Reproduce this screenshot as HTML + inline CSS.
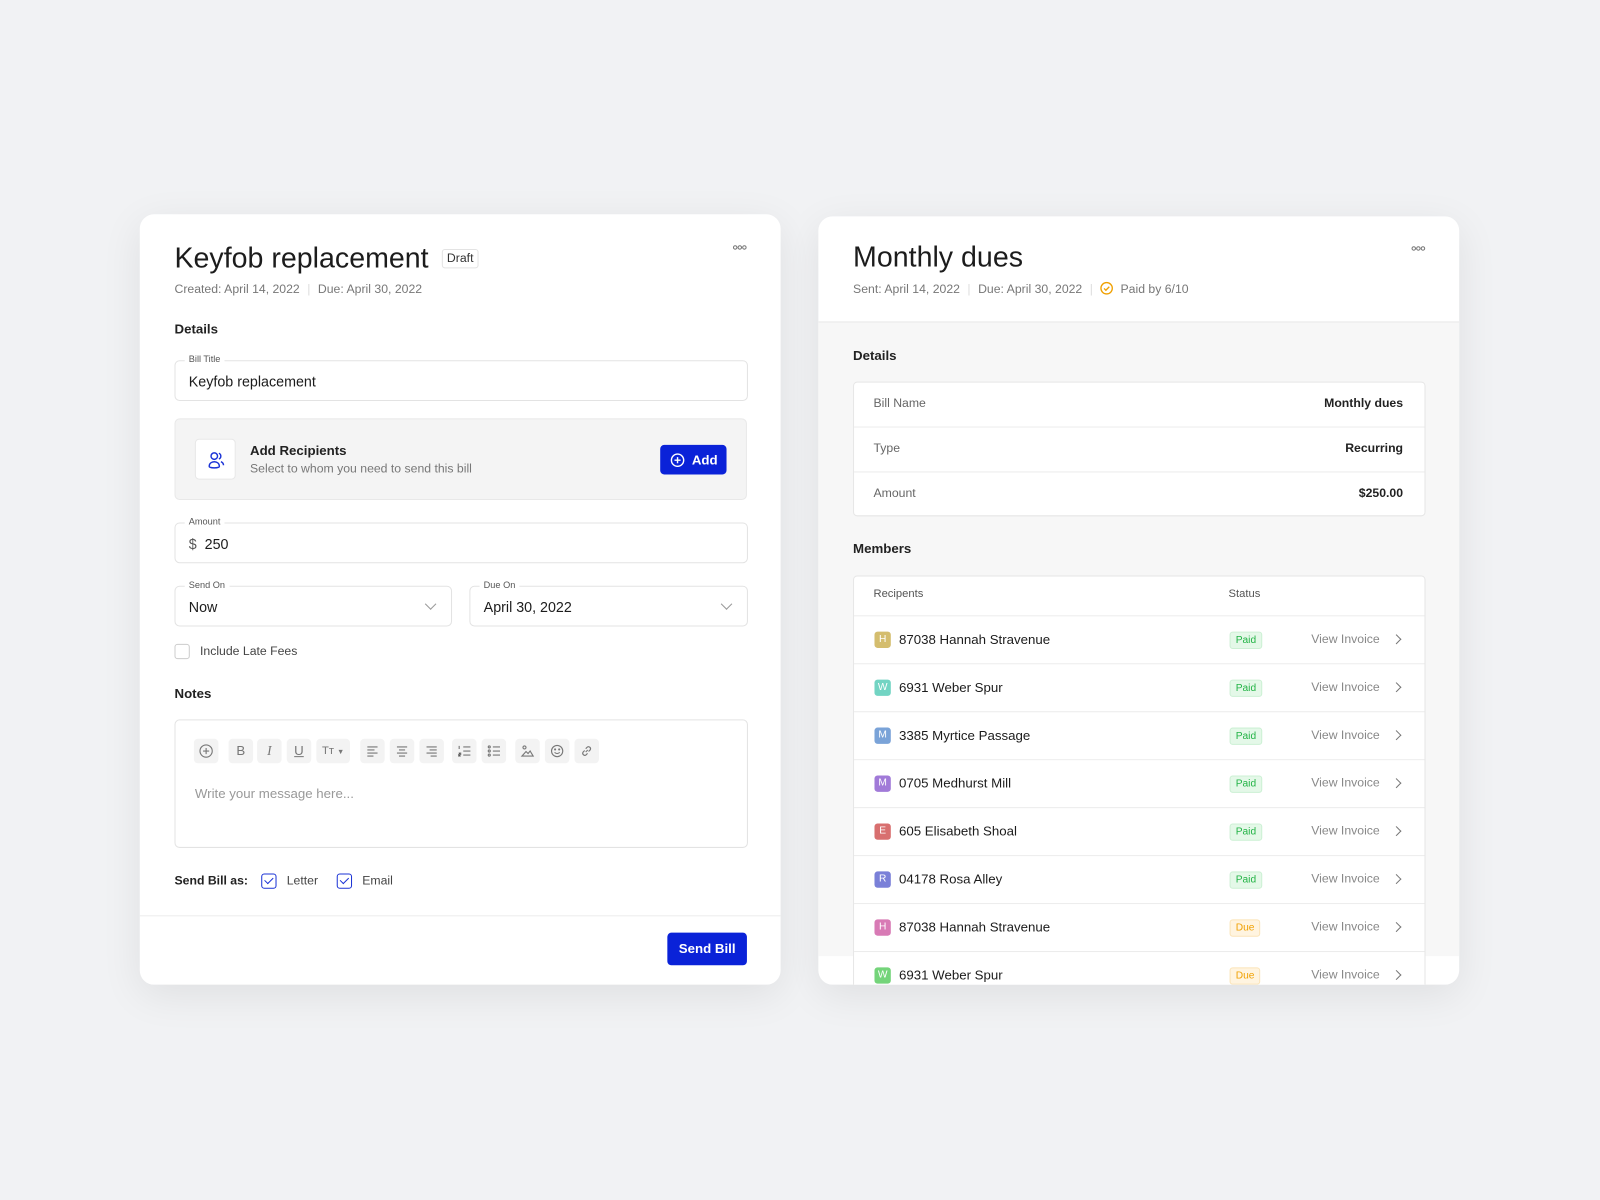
<!DOCTYPE html>
<html><head><meta charset="utf-8">
<style>
*{box-sizing:border-box;margin:0;padding:0}
html,body{width:1600px;height:1200px;overflow:hidden;background:#f1f2f4;font-family:"Liberation Sans",sans-serif;color:#1c1c1c}
#w{position:absolute;left:0;top:0;width:1568px;height:1176px;transform:scale(1.0204);transform-origin:0 0}
.a{position:absolute}
.card{position:absolute;background:#fff;border-radius:14px;box-shadow:0 10px 40px rgba(0,0,0,.08);overflow:hidden}
.t{font-size:12px;color:#777;white-space:nowrap}
.inp{position:absolute;border:1px solid #e3e3e3;border-radius:5px;background:#fff}
.lbl{position:absolute;top:-7px;left:9px;background:#fff;padding:0 4px;font-size:9px;color:#555}
.val{position:absolute;left:13px;top:12px;font-size:14px;color:#1c1c1c}
.chev{position:absolute;width:8px;height:8px;border-right:1.3px solid #999;border-bottom:1.3px solid #999;transform:rotate(45deg)}
.tb{position:absolute;top:724px;width:24px;height:24px;background:#f3f3f3;border-radius:4px;font-size:13px;color:#777;text-align:center;line-height:24px}
.tb svg{position:absolute;left:5px;top:5px}
.cb{position:absolute;width:15px;height:15px;border:1.5px solid #1b33d6;border-radius:3px}
.cb:after{content:"";position:absolute;left:4px;top:1px;width:4px;height:7px;border-right:1.5px solid #1b33d6;border-bottom:1.5px solid #1b33d6;transform:rotate(45deg)}
.row{position:absolute;left:0;right:0;border-top:1px solid #ececec;height:47px}
.av{position:absolute;left:20px;top:15px;width:16px;height:16px;border-radius:3px;color:#fff;font-size:10px;text-align:center;line-height:16px}
.nm{position:absolute;left:44px;top:15px;font-size:13px;color:#1c1c1c}
.bd{position:absolute;left:368px;top:15px;height:17px;padding:0 5px;font-size:10px;border-radius:3px;line-height:16px}
.paid{background:#e4f8e8;color:#22b345;border:1px solid #ccf0d4}
.due{background:#fff4e0;color:#f0a000;border:1px solid #fbe4b8}
.vi{position:absolute;left:448px;top:15px;font-size:12px;color:#888}
.rc{position:absolute;left:528px;top:19px;width:7px;height:7px;border-right:1.3px solid #777;border-top:1.3px solid #777;transform:rotate(45deg)}
</style></head><body><div id="w">

<div class="card" style="left:137px;top:210px;width:628px;height:755px">
 <div class="a" style="left:34px;top:27px;font-size:28px;color:#1c1c1c">Keyfob replacement</div>
 <div class="a" style="left:296px;top:34px;height:19px;border:1px solid #e3e3e3;border-radius:3px;padding:0 4px;font-size:12px;line-height:17px;color:#333">Draft</div>
 <svg class="a" style="left:581px;top:30px" width="14" height="5" viewBox="0 0 14 5" fill="none" stroke="#777" stroke-width="1"><circle cx="2.5" cy="2.5" r="1.7"/><circle cx="7" cy="2.5" r="1.7"/><circle cx="11.5" cy="2.5" r="1.7"/></svg>
 <div class="a t" style="left:34px;top:66px">Created: April 14, 2022 <span style="color:#ddd;margin:0 4px">|</span> Due: April 30, 2022</div>
 <div class="a" style="left:34px;top:105px;font-size:13px;font-weight:bold;color:#222">Details</div>

 <div class="inp" style="left:34px;top:143px;width:562px;height:40px"><div class="lbl">Bill Title</div><div class="val">Keyfob replacement</div></div>

 <div class="a" style="left:34px;top:200px;width:561px;height:80px;background:#f4f4f4;border:1px solid #e8e8e8;border-radius:5px">
  <div class="a" style="left:19px;top:19px;width:40px;height:40px;background:#fff;border:1px solid #e8e8e8;border-radius:4px">
   <svg class="a" style="left:10px;top:10px" width="20" height="20" viewBox="0 0 20 20" fill="none" stroke="#1b33d6" stroke-width="1.4"><circle cx="8" cy="6" r="3.2"/><path d="M3 16c0-3 2.5-4.5 5-4.5s5 1.5 5 4.5c0 1-2.5 1.5-5 1.5S3 17 3 16z"/><path d="M12.5 3.2a3 3 0 0 1 0 5.6M14.5 11.5c1.6.6 2.5 1.8 2.5 3.5"/></svg>
  </div>
  <div class="a" style="left:73px;top:23px;font-size:13px;font-weight:bold;color:#222">Add Recipients</div>
  <div class="a" style="left:73px;top:41px;font-size:12px;color:#777">Select to whom you need to send this bill</div>
  <div class="a" style="left:475px;top:25px;width:65px;height:29px;background:#0a22d8;border-radius:4px;color:#fff;font-size:13px;font-weight:bold;line-height:29px;padding-left:31px">Add
   <svg class="a" style="left:10px;top:8px" width="14" height="14" viewBox="0 0 14 14" fill="none" stroke="#fff" stroke-width="1.4"><circle cx="7" cy="7" r="6"/><path d="M7 4v6M4 7h6"/></svg></div>
 </div>

 <div class="inp" style="left:34px;top:302px;width:562px;height:40px"><div class="lbl">Amount</div><div class="val"><span style="color:#555">$</span>&nbsp; 250</div></div>
 <div class="inp" style="left:34px;top:364px;width:272px;height:40px"><div class="lbl">Send On</div><div class="val">Now</div><div class="chev" style="right:16px;top:13px"></div></div>
 <div class="inp" style="left:323px;top:364px;width:273px;height:40px"><div class="lbl">Due On</div><div class="val">April 30, 2022</div><div class="chev" style="right:16px;top:13px"></div></div>

 <div class="a" style="left:34px;top:421px;width:15px;height:15px;border:1px solid #ccc;border-radius:3px"></div>
 <div class="a" style="left:59px;top:421px;font-size:12px;color:#444">Include Late Fees</div>

 <div class="a" style="left:34px;top:462px;font-size:13px;font-weight:bold;color:#222">Notes</div>
 <div class="a" style="left:34px;top:495px;width:562px;height:126px;border:1px solid #e3e3e3;border-radius:5px"></div>
 <div class="a" style="left:54px;top:560px;font-size:13px;color:#999">Write your message here...</div>
</div>

<!-- toolbar -->
<div class="tb" style="left:190px"><svg width="14" height="14" viewBox="0 0 14 14" fill="none" stroke="#777" stroke-width="1.1"><circle cx="7" cy="7" r="6"/><path d="M7 4v6M4 7h6"/></svg></div>
<div class="tb" style="left:224px">B</div>
<div class="tb" style="left:252px;font-style:italic;font-family:'Liberation Serif',serif">I</div>
<div class="tb" style="left:281px;text-decoration:underline">U</div>
<div class="tb" style="left:310px;width:33px;font-size:11px">Tт <span style="font-size:7px">▼</span></div>
<div class="tb" style="left:353px"><svg width="14" height="14" viewBox="0 0 14 14" stroke="#777" stroke-width="1.1"><path d="M2 3h10M2 6h7M2 9h10M2 12h6"/></svg></div>
<div class="tb" style="left:382px"><svg width="14" height="14" viewBox="0 0 14 14" stroke="#777" stroke-width="1.1"><path d="M2 3h10M4 6h6M2 9h10M4 12h6"/></svg></div>
<div class="tb" style="left:411px"><svg width="14" height="14" viewBox="0 0 14 14" stroke="#777" stroke-width="1.1"><path d="M2 3h10M5 6h7M2 9h10M6 12h6"/></svg></div>
<div class="tb" style="left:443px"><svg width="14" height="14" viewBox="0 0 14 14" stroke="#777" stroke-width="1.1"><path d="M6 3h7M6 7h7M6 11h7M2 2v3M1.5 9h2v1.5h-2V12h2"/></svg></div>
<div class="tb" style="left:472px"><svg width="14" height="14" viewBox="0 0 14 14" stroke="#777" stroke-width="1.1" fill="none"><path d="M6 3h7M6 7h7M6 11h7"/><circle cx="2.5" cy="3" r="1"/><circle cx="2.5" cy="7" r="1"/><circle cx="2.5" cy="11" r="1"/></svg></div>
<div class="tb" style="left:505px"><svg width="14" height="14" viewBox="0 0 14 14" stroke="#777" stroke-width="1.1" fill="none"><circle cx="4" cy="3.5" r="1.5"/><path d="M1.5 12h11l-3-5-2 2.5-2-2z"/></svg></div>
<div class="tb" style="left:534px"><svg width="14" height="14" viewBox="0 0 14 14" stroke="#777" stroke-width="1.1" fill="none"><circle cx="7" cy="7" r="5.5"/><path d="M4.5 8.3c1.2 1.6 3.8 1.6 5 0"/><circle cx="5" cy="5.5" r=".5"/><circle cx="9" cy="5.5" r=".5"/></svg></div>
<div class="tb" style="left:563px"><svg width="14" height="14" viewBox="0 0 14 14" stroke="#777" stroke-width="1.1" fill="none"><path d="M6 8l2-2M5 6.5L3.5 8a2 2 0 0 0 2.8 2.8L7.8 9.3M8.8 7.5L10.3 6a2 2 0 0 0-2.8-2.8L6 4.7"/></svg></div>

<div class="a" style="left:171px;top:856px;font-size:12px;font-weight:bold;color:#222">Send Bill as:</div>
<div class="cb" style="left:256px;top:856px"></div>
<div class="a" style="left:281px;top:856px;font-size:12px;color:#444">Letter</div>
<div class="cb" style="left:330px;top:856px"></div>
<div class="a" style="left:355px;top:856px;font-size:12px;color:#444">Email</div>
<div class="a" style="left:137px;top:897px;width:628px;height:1px;background:#ececec"></div>
<div class="a" style="left:654px;top:914px;width:78px;height:32px;background:#0a22d8;border-radius:4px;color:#fff;font-size:13px;font-weight:bold;text-align:center;line-height:32px">Send Bill</div>

<div class="card" style="left:802px;top:212px;width:628px;height:753px">
 <div class="a" style="left:0;top:103px;width:628px;height:622px;background:#f7f7f7;border-top:1px solid #e8e8e8"></div>
 <div class="a" style="left:34px;top:24px;font-size:28px;color:#1c1c1c">Monthly dues</div>
 <svg class="a" style="left:581px;top:29px" width="14" height="5" viewBox="0 0 14 5" fill="none" stroke="#777" stroke-width="1"><circle cx="2.5" cy="2.5" r="1.7"/><circle cx="7" cy="2.5" r="1.7"/><circle cx="11.5" cy="2.5" r="1.7"/></svg>
 <div class="a t" style="left:34px;top:64px">Sent: April 14, 2022 <span style="color:#ddd;margin:0 4px">|</span> Due: April 30, 2022 <span style="color:#ddd;margin:0 4px">|</span> <svg width="13" height="13" viewBox="0 0 14 14" fill="none" stroke="#f0a000" stroke-width="1.4" style="vertical-align:-2px"><circle cx="7" cy="7" r="6"/><path d="M4.3 7.2l1.9 1.9 3.6-3.7"/></svg>&nbsp; Paid by 6/10</div>
 <div class="a" style="left:34px;top:129px;font-size:13px;font-weight:bold;color:#222">Details</div>
 <div class="a" style="left:34px;top:162px;width:561px;height:132px;background:#fff;border:1px solid #e6e6e6;border-radius:4px;font-size:12px">
  <div class="a" style="left:19px;top:13px;color:#666">Bill Name</div><div class="a" style="right:21px;top:13px;font-weight:bold;color:#222">Monthly dues</div>
  <div class="a" style="left:0;right:0;top:43px;border-top:1px solid #ececec"></div>
  <div class="a" style="left:19px;top:57px;color:#666">Type</div><div class="a" style="right:21px;top:57px;font-weight:bold;color:#222">Recurring</div>
  <div class="a" style="left:0;right:0;top:87px;border-top:1px solid #ececec"></div>
  <div class="a" style="left:19px;top:101px;color:#666">Amount</div><div class="a" style="right:21px;top:101px;font-weight:bold;color:#222">$250.00</div>
 </div>
 <div class="a" style="left:34px;top:318px;font-size:13px;font-weight:bold;color:#222">Members</div>
 <div class="a" style="left:34px;top:352px;width:561px;height:420px;background:#fff;border:1px solid #e6e6e6;border-radius:4px">
  <div class="a" style="left:19px;top:11px;font-size:11px;color:#555">Recipents</div>
  <div class="a" style="left:367px;top:11px;font-size:11px;color:#555">Status</div>
  <div class="row" style="top:38px"><div class="av" style="background:#d4bd6e">H</div><div class="nm">87038 Hannah Stravenue</div><div class="bd paid">Paid</div><div class="vi">View Invoice</div><div class="rc"></div></div>
  <div class="row" style="top:85px"><div class="av" style="background:#72d4c3">W</div><div class="nm">6931 Weber Spur</div><div class="bd paid">Paid</div><div class="vi">View Invoice</div><div class="rc"></div></div>
  <div class="row" style="top:132px"><div class="av" style="background:#7aa3d8">M</div><div class="nm">3385 Myrtice Passage</div><div class="bd paid">Paid</div><div class="vi">View Invoice</div><div class="rc"></div></div>
  <div class="row" style="top:179px"><div class="av" style="background:#a17ad8">M</div><div class="nm">0705 Medhurst Mill</div><div class="bd paid">Paid</div><div class="vi">View Invoice</div><div class="rc"></div></div>
  <div class="row" style="top:226px"><div class="av" style="background:#d86f6f">E</div><div class="nm">605 Elisabeth Shoal</div><div class="bd paid">Paid</div><div class="vi">View Invoice</div><div class="rc"></div></div>
  <div class="row" style="top:273px"><div class="av" style="background:#7a80d8">R</div><div class="nm">04178 Rosa Alley</div><div class="bd paid">Paid</div><div class="vi">View Invoice</div><div class="rc"></div></div>
  <div class="row" style="top:320px"><div class="av" style="background:#d87ab5">H</div><div class="nm">87038 Hannah Stravenue</div><div class="bd due">Due</div><div class="vi">View Invoice</div><div class="rc"></div></div>
  <div class="row" style="top:367px"><div class="av" style="background:#74d47a">W</div><div class="nm">6931 Weber Spur</div><div class="bd due">Due</div><div class="vi">View Invoice</div><div class="rc"></div></div>
 </div>
</div>

</div></body></html>
